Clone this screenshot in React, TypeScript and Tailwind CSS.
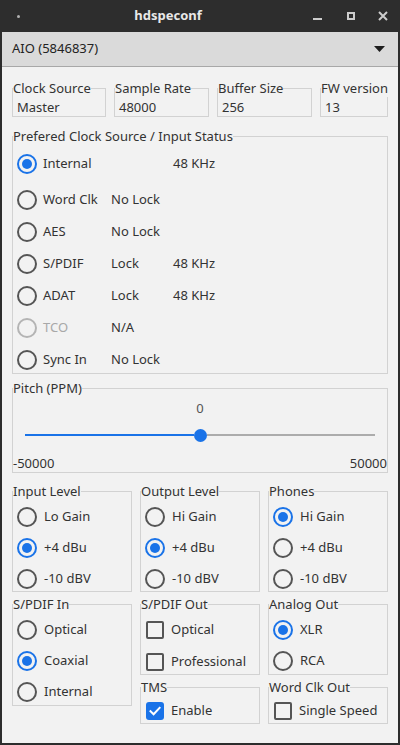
import type { ReactNode } from "react";

const font = "font-['Noto_Sans','DejaVu_Sans',sans-serif]";

function Group({ title, className = "", children }: { title: string; className?: string; children: ReactNode }) {
  return (
    <fieldset className={"m-0 min-w-0 border border-[#d2d2d2] p-0 " + className}>
      <legend className="whitespace-nowrap p-0 leading-[18px]">{title}</legend>
      {children}
    </fieldset>
  );
}

function Radio({ checked = false, disabled = false }: { checked?: boolean; disabled?: boolean }) {
  if (checked) {
    return (
      <span className="flex h-[20px] w-[20px] shrink-0 items-center justify-center rounded-full border-2 border-[#1a73e8]">
        <span className="h-[10px] w-[10px] rounded-full bg-[#1a73e8]" />
      </span>
    );
  }
  return (
    <span
      className={
        "h-[20px] w-[20px] shrink-0 rounded-full border-2 " +
        (disabled ? "border-[#b4b4b4]" : "border-[#555555]")
      }
    />
  );
}

function Check({ checked = false }: { checked?: boolean }) {
  if (checked) {
    return (
      <span className="flex h-[18px] w-[18px] shrink-0 items-center justify-center rounded-[3px] bg-[#1a73e8]">
        <svg width="14" height="14" viewBox="0 0 14 14" fill="none">
          <path d="M2.5 7.2 5.6 10.2 11.6 3.8" stroke="white" strokeWidth="2" strokeLinecap="square" />
        </svg>
      </span>
    );
  }
  return <span className="h-[18px] w-[18px] shrink-0 rounded-[2px] border-2 border-[#555555]" />;
}

function RadioRow({ label, checked }: { label: string; checked?: boolean }) {
  return (
    <div className="flex h-[24px] items-center gap-[7px] pl-[4px]">
      <Radio checked={checked} />
      <span>{label}</span>
    </div>
  );
}

function CheckRow({ label, checked }: { label: string; checked?: boolean }) {
  return (
    <div className="flex h-[24px] items-center gap-[7px] pl-[5px]">
      <Check checked={checked} />
      <span>{label}</span>
    </div>
  );
}

const sources = [
  { name: "Internal", status: "", freq: "48 KHz", checked: true },
  { name: "Word Clk", status: "No Lock", freq: "" },
  { name: "AES", status: "No Lock", freq: "" },
  { name: "S/PDIF", status: "Lock", freq: "48 KHz" },
  { name: "ADAT", status: "Lock", freq: "48 KHz" },
  { name: "TCO", status: "N/A", freq: "", disabled: true },
  { name: "Sync In", status: "No Lock", freq: "" },
];

export default function App() {
  return (
    <div className={"flex h-[745px] w-[400px] flex-col bg-[#2d2d2d] text-[13px] text-[#333333] " + font}>
      {/* title bar */}
      <div className="flex h-[32px] shrink-0 items-center">
        <div className="flex w-[36px] justify-center">
          <span className="h-[3px] w-[3px] rounded-full bg-[#b0b0b0]" />
        </div>
        <div className="flex-1 text-center text-[13px] font-bold text-[#e8e8e8]">hdspeconf</div>
        <div className="flex w-[100px] items-center pl-[13px]">
          <span className="mt-[5px] h-[2px] w-[9px] bg-[#cccccc]" />
          <span className="ml-[25px] h-[8px] w-[8px] border-2 border-[#cccccc]" />
          <svg className="ml-[23px]" width="10" height="10" viewBox="0 0 10 10">
            <path d="M1 1 9 9M9 1 1 9" stroke="#cccccc" strokeWidth="2" />
          </svg>
        </div>
      </div>

      <div className="mx-[2px] mb-[2px] flex flex-1 flex-col bg-[#f2f2f2]">
        {/* device combo */}
        <div className="flex h-[35px] shrink-0 items-center justify-between border-b border-[#a8a8a8] bg-[#dadada] pl-[10px] pr-[13px] text-[#222222]">
          <span>AIO (5846837)</span>
          <svg width="11" height="6" viewBox="0 0 11 6">
            <path d="M0 0h11L5.5 6z" fill="#1e1e1e" />
          </svg>
        </div>

        <div className="flex flex-col px-[10px] pt-[12px]">
          {/* info boxes */}
          <div className="flex gap-2">
            <Group title="Clock Source" className="w-[94px]">
              <div className="h-[19px] pl-[4px] pt-[1px] leading-[19px]">Master</div>
            </Group>
            <Group title="Sample Rate" className="w-[95px]">
              <div className="h-[19px] pl-[4px] pt-[1px] leading-[19px]">48000</div>
            </Group>
            <Group title="Buffer Size" className="w-[95px]">
              <div className="h-[19px] pl-[4px] pt-[1px] leading-[19px]">256</div>
            </Group>
            <Group title="FW version" className="w-[68px]">
              <div className="h-[19px] pl-[4px] pt-[1px] leading-[19px]">13</div>
            </Group>
          </div>

          {/* clock source */}
          <Group title="Prefered Clock Source / Input Status" className="mt-[10px]">
            <div className="flex flex-col gap-2 pb-[1px] pt-[7px]">
              {sources.map((s, i) => (
                <div key={s.name} className={"flex h-[24px] items-center pl-[4px] " + (i === 1 ? "mt-[4px]" : "")}>
                  <div className="flex w-[94px] items-center gap-[6px]">
                    <Radio checked={s.checked} disabled={s.disabled} />
                    <span className={s.disabled ? "text-[#a8a8a8]" : ""}>{s.name}</span>
                  </div>
                  <span className="w-[62px]">{s.status}</span>
                  <span>{s.freq}</span>
                </div>
              ))}
            </div>
          </Group>

          {/* pitch */}
          <Group title="Pitch (PPM)" className="mt-[5px]">
            <div className="flex flex-col pt-[2px]">
              <div className="h-[18px] text-center leading-[18px] text-[#555555]">0</div>
              <div className="mx-[12px] mt-[9px] flex h-[18px] items-center">
                <div className="h-[2px] flex-1 bg-[#1a73e8]" />
                <div className="h-[13px] w-[13px] rounded-full bg-[#1a73e8]" />
                <div className="h-[2px] flex-1 bg-[#acacac]" />
              </div>
              <div className="mt-[10px] flex h-[18px] justify-between leading-[18px]">
                <span>-50000</span>
                <span>50000</span>
              </div>
            </div>
          </Group>

          {/* levels */}
          <div className="mt-[9px] grid grid-cols-3 gap-2">
            <Group title="Input Level">
              <div className="flex flex-col gap-[7px] pt-[5px]">
                <RadioRow label="Lo Gain" />
                <RadioRow label="+4 dBu" checked />
                <RadioRow label="-10 dBV" />
              </div>
            </Group>
            <Group title="Output Level">
              <div className="flex flex-col gap-[7px] pt-[5px]">
                <RadioRow label="Hi Gain" />
                <RadioRow label="+4 dBu" checked />
                <RadioRow label="-10 dBV" />
              </div>
            </Group>
            <Group title="Phones">
              <div className="flex flex-col gap-[7px] pt-[5px]">
                <RadioRow label="Hi Gain" checked />
                <RadioRow label="+4 dBu" />
                <RadioRow label="-10 dBV" />
              </div>
            </Group>
          </div>

          <div className="mt-[3px] grid grid-cols-3 items-start gap-2">
            <Group title="S/PDIF In">
              <div className="flex flex-col gap-[7px] pb-[1px] pt-[5px]">
                <RadioRow label="Optical" />
                <RadioRow label="Coaxial" checked />
                <RadioRow label="Internal" />
              </div>
            </Group>
            <div className="flex flex-col gap-[3px]">
              <Group title="S/PDIF Out">
                <div className="flex flex-col gap-2 pt-[5px]">
                  <CheckRow label="Optical" />
                  <CheckRow label="Professional" />
                </div>
              </Group>
              <Group title="TMS">
                <div className="pt-[3px]">
                  <CheckRow label="Enable" checked />
                </div>
              </Group>
            </div>
            <div className="flex flex-col gap-[3px]">
              <Group title="Analog Out">
                <div className="flex flex-col gap-[7px] pb-[1px] pt-[5px]">
                  <RadioRow label="XLR" checked />
                  <RadioRow label="RCA" />
                </div>
              </Group>
              <Group title="Word Clk Out">
                <div className="pt-[3px]">
                  <CheckRow label="Single Speed" />
                </div>
              </Group>
            </div>
          </div>
        </div>
      </div>
    </div>
  );
}
